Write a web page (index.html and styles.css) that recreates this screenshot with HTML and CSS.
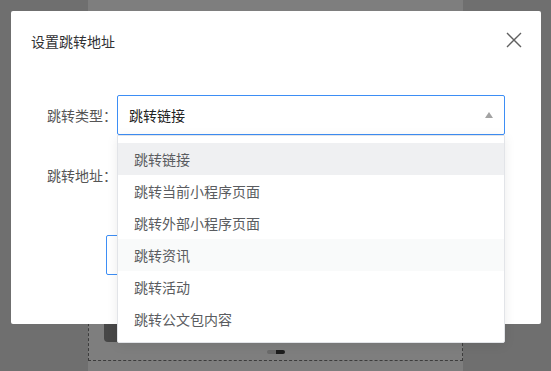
FILE: index.html
```html
<!DOCTYPE html>
<html lang="zh-CN">
<head>
  <meta charset="UTF-8">
  <meta name="viewport" content="width=device-width, initial-scale=1.0">
  <link rel="stylesheet" href="styles.css">
  <title>设置跳转地址</title>
</head>
<body>

  <!-- page underneath the mask -->
  <div class="page">
    <div class="canvas">
      <div class="canvasBtn"></div>
      <div class="dots"><span class="dot"></span><span class="dot active"></span></div>
    </div>
  </div>

  <div class="mask">
    <div class="dialog">
      <div class="dialogHeader">
        <span class="dialogTitle">设置跳转地址</span>
        <button class="closeBtn" aria-label="关闭">
          <svg width="16" height="16" viewBox="0 0 16 16">
            <path d="M1 1L15 15M15 1L1 15" stroke="#606060" stroke-width="1.4" fill="none"/>
          </svg>
        </button>
      </div>

      <div class="dialogBody">
        <div class="formItem">
          <label class="formLabel">跳转类型：</label>
          <div class="select">
            <span class="selectValue">跳转链接</span>
            <span class="selectArrow"></span>

            <ul class="dropdown">
              <li class="option hover">跳转链接</li>
              <li class="option">跳转当前小程序页面</li>
              <li class="option">跳转外部小程序页面</li>
              <li class="option soft">跳转资讯</li>
              <li class="option">跳转活动</li>
              <li class="option">跳转公文包内容</li>
            </ul>
          </div>
        </div>

        <div class="formItem">
          <label class="formLabel">跳转地址：</label>
          <div class="input"></div>
        </div>

        <div class="formItem footerItem">
          <div class="linkBox"></div>
        </div>
      </div>
    </div>
  </div>

</body>
</html>
```

FILE: styles.css
```css
* {
  box-sizing: border-box;
}

body {
  margin: 0;
  width: 551px;
  height: 371px;
  overflow: hidden;
  position: relative;
  background-color: #6f6f6f;
  font-family: "Noto Sans CJK SC", "Noto Sans", sans-serif;
  font-size: 14px;
}

.page {
  margin-left: 88px;
  width: 375px;
  height: 371px;
  padding-top: 40px;
  background-color: #7e7e7e;
}

.canvas {
  height: 321px;
  border: 1px dashed #3c3c3c;
  border-top: none;
  display: flex;
  flex-direction: column;
  justify-content: flex-end;
  padding: 0 0 6px 15px;
}

.canvasBtn {
  width: 60px;
  height: 40px;
  background-color: #474747;
  border-radius: 4px;
  margin-bottom: 8px;
}

.dots {
  display: flex;
  justify-content: center;
  margin-left: -15px;
}

.dot {
  width: 9px;
  height: 4px;
  background-color: #6a6a6a;
  border-radius: 2px 0 0 2px;
}

.dot.active {
  background-color: #1e1e1e;
  border-radius: 0 2px 2px 0;
}

.mask {
  position: absolute;
  top: 0;
  left: 0;
  width: 100%;
  height: 100%;
}

.dialog {
  position: absolute;
  top: 11px;
  left: 11px;
  width: 530px;
  height: 313px;
  background-color: #fff;
  border-radius: 2px;
}

.dialogHeader {
  position: relative;
  padding: 19px 20px 0;
  height: 53px;
}

.dialogTitle {
  color: #303133;
  font-size: 14px;
  line-height: 22px;
}

.closeBtn {
  position: absolute;
  top: 21px;
  right: 19px;
  padding: 0;
  border: none;
  background: none;
  width: 16px;
  height: 16px;
  display: flex;
}

.dialogBody {
  padding: 31px 20px 0;
}

.formItem {
  display: flex;
  align-items: center;
  height: 40px;
  margin-bottom: 20px;
}

.footerItem {
  margin-top: 40px;
}

.formLabel {
  width: 86px;
  text-align: right;
  color: #555;
  line-height: 40px;
}

.select {
  position: relative;
  width: 388px;
  height: 40px;
  border: 1px solid #3d8ef5;
  border-radius: 2px;
  display: flex;
  align-items: center;
  padding: 0 11px;
}

.selectValue {
  flex: 1;
  color: #222;
}

.selectArrow {
  width: 0;
  height: 0;
  border-left: 4px solid transparent;
  border-right: 4px solid transparent;
  border-bottom: 6px solid #a3a3a3;
}

.dropdown {
  position: absolute;
  top: 39px;
  left: -1px;
  width: 388px;
  margin: 0;
  padding: 7px 0;
  list-style: none;
  background-color: #fff;
  border: 1px solid #e2e4e8;
  border-radius: 0 0 2px 2px;
  box-shadow: 0 2px 12px rgba(0, 0, 0, 0.08);
  z-index: 10;
}

.option {
  height: 32px;
  line-height: 32px;
  padding: 0 16px;
  color: #5a5c60;
}

.option.hover {
  background-color: #eff0f2;
}

.option.soft {
  background-color: #f9fafa;
}

.input {
  width: 388px;
  height: 40px;
  border: 1px solid #dcdfe6;
  border-radius: 2px;
}

.linkBox {
  margin-left: 75px;
  width: 200px;
  height: 40px;
  border: 1px solid #3d8ef5;
  border-radius: 2px;
}
```
